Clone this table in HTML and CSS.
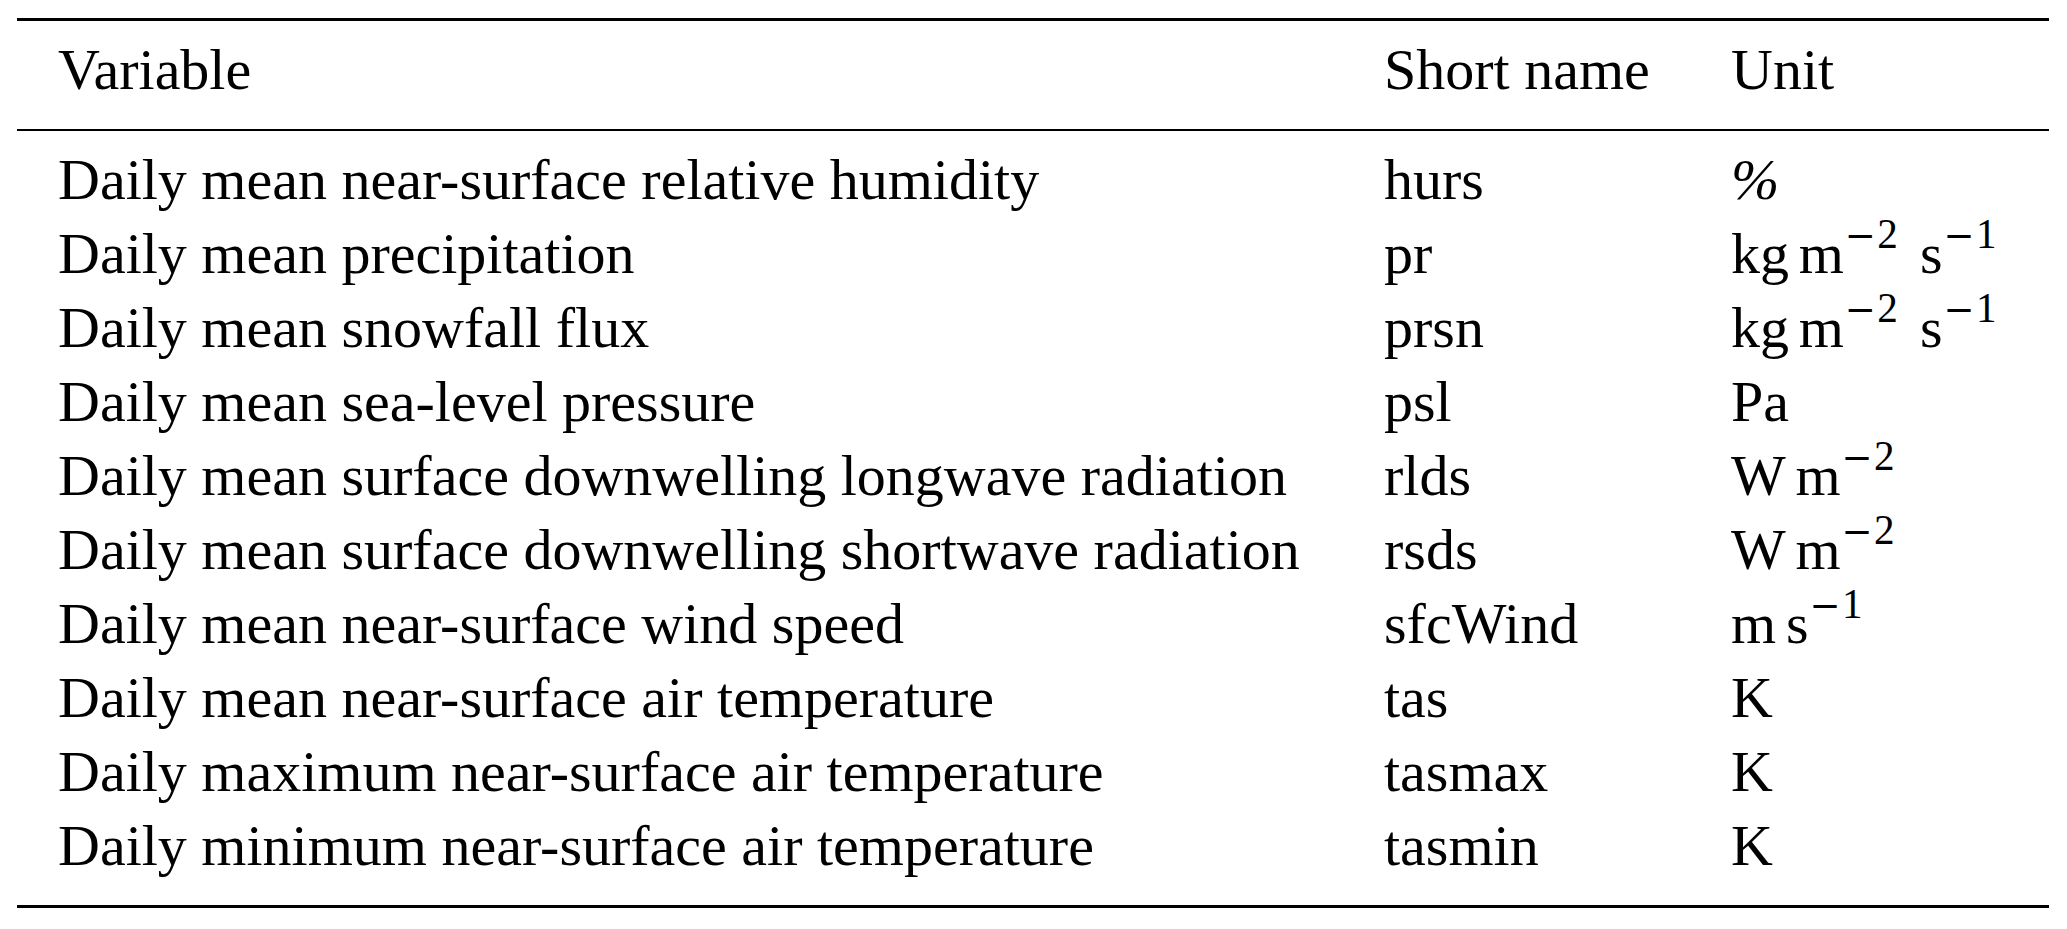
FILE: index.html
```html
<!DOCTYPE html>
<html lang="en">
<head>
    <meta charset="UTF-8">
    <title>Variables</title>
    <link rel="stylesheet" href="styles.css">
</head>
<body>

    <!-- Variable table -->
    <table class="var-table">
        <colgroup>
            <col class="col-var">
            <col class="col-short">
            <col class="col-unit">
        </colgroup>
        <thead>
            <tr>
                <th>Variable</th>
                <th>Short name</th>
                <th>Unit</th>
            </tr>
        </thead>
        <tbody>
            <tr><td>Daily mean near-surface relative humidity</td><td>hurs</td><td><span class="pct">%</span></td></tr>
            <tr><td>Daily mean precipitation</td><td>pr</td><td>kg<span class="u">m<sup><span class="minus">&minus;</span>2</sup></span><span class="u">s<sup><span class="minus">&minus;</span>1</sup></span></td></tr>
            <tr><td>Daily mean snowfall flux</td><td>prsn</td><td>kg<span class="u">m<sup><span class="minus">&minus;</span>2</sup></span><span class="u">s<sup><span class="minus">&minus;</span>1</sup></span></td></tr>
            <tr><td>Daily mean sea-level pressure</td><td>psl</td><td>Pa</td></tr>
            <tr><td>Daily mean surface downwelling longwave radiation</td><td>rlds</td><td>W<span class="u">m<sup><span class="minus">&minus;</span>2</sup></span></td></tr>
            <tr><td>Daily mean surface downwelling shortwave radiation</td><td>rsds</td><td>W<span class="u">m<sup><span class="minus">&minus;</span>2</sup></span></td></tr>
            <tr><td>Daily mean near-surface wind speed</td><td>sfcWind</td><td>m<span class="u">s<sup><span class="minus">&minus;</span>1</sup></span></td></tr>
            <tr><td>Daily mean near-surface air temperature</td><td>tas</td><td>K</td></tr>
            <tr><td>Daily maximum near-surface air temperature</td><td>tasmax</td><td>K</td></tr>
            <tr><td>Daily minimum near-surface air temperature</td><td>tasmin</td><td>K</td></tr>
        </tbody>
    </table>

</body>
</html>
```

FILE: styles.css
```css
body { margin: 0; padding: 18px 0 0 17px; background: #fff; color: #000; font-family: "Liberation Serif", "Times New Roman", serif; }
.var-table { border-collapse: separate; border-spacing: 0; table-layout: fixed; width: 2032px; font-size: 58px; line-height: 74px; }
.col-var { width: 1326px; }
.col-short { width: 347px; }
.col-unit { width: 359px; }
.var-table th, .var-table td { padding: 0 0 0 41px; text-align: left; font-weight: normal; white-space: nowrap; }
.var-table th { border-top: 3px solid #000; border-bottom: 2px solid #000; padding-top: 12px; padding-bottom: 22px; }
.var-table tbody tr:first-child td { padding-top: 12px; }
.var-table tbody tr:last-child td { padding-bottom: 22px; border-bottom: 3px solid #000; }
.u { margin-left: 0.17em; }
sup { font-size: 0.71em; line-height: 0; vertical-align: 0.6em; margin: 0 0.3em 0 0.02em; }
.minus { font-family: "DejaVu Serif", serif; font-size: 0.9em; margin-right: 0.04em; }
.pct { font-style: italic; }
```
